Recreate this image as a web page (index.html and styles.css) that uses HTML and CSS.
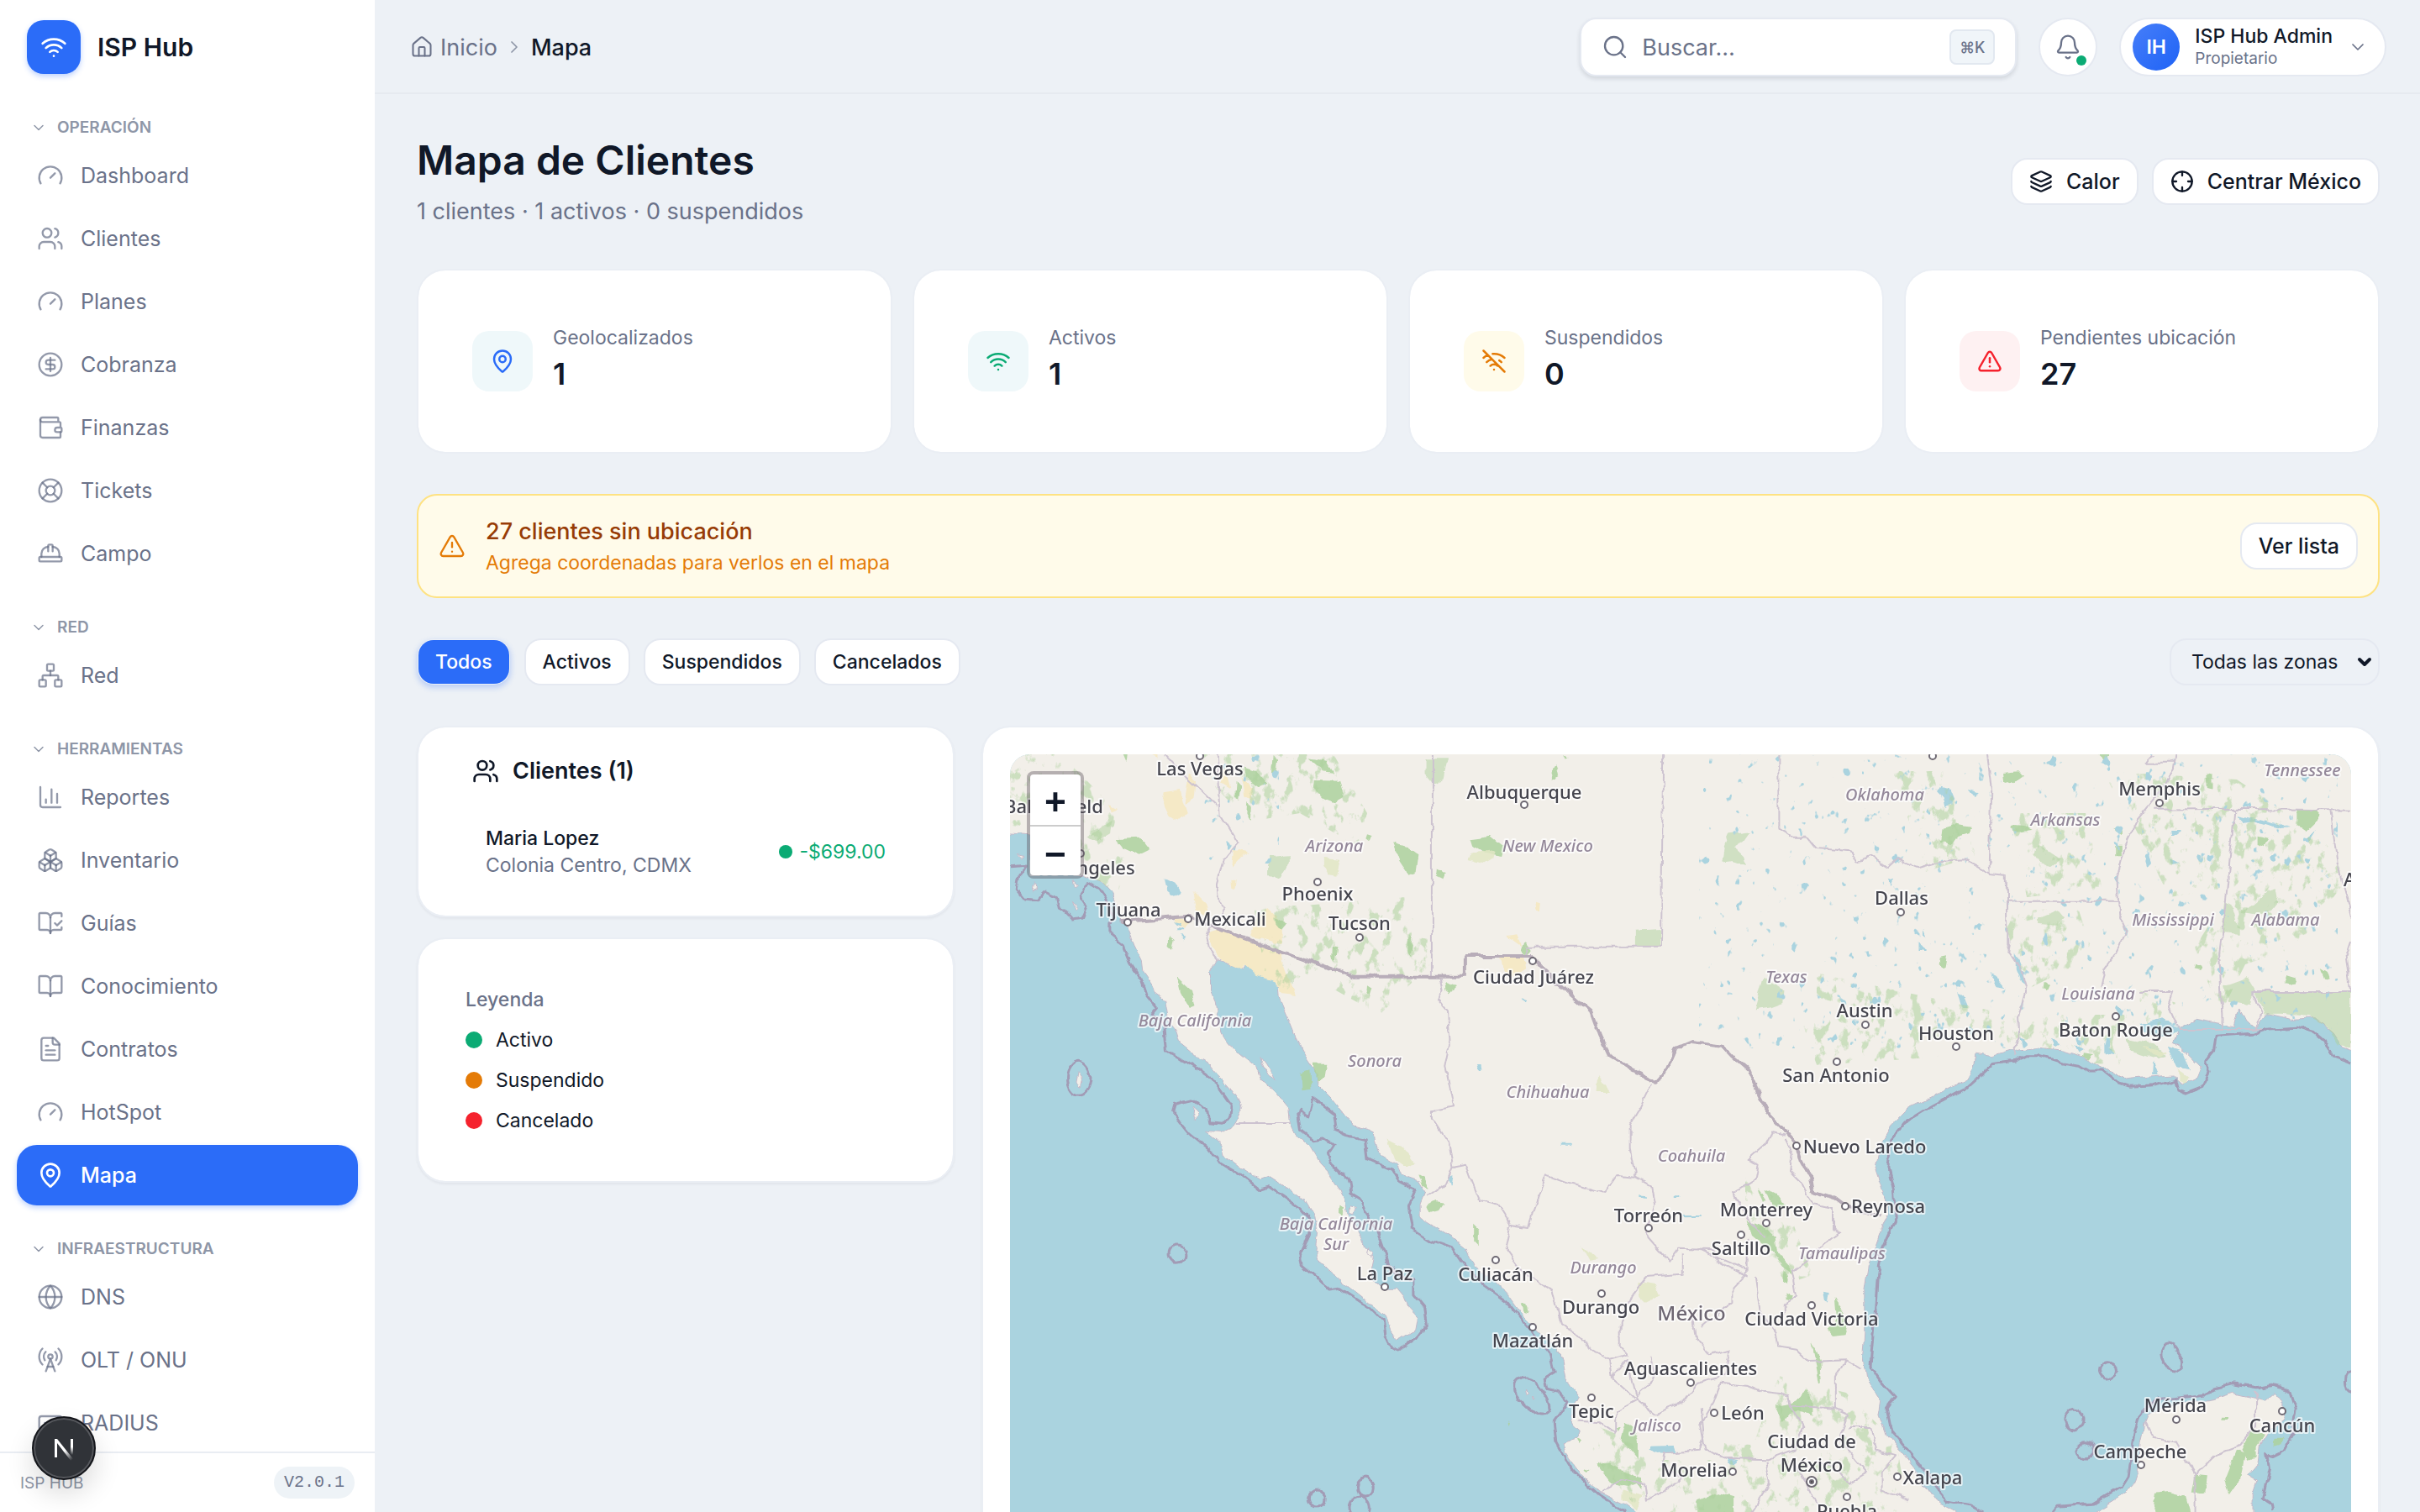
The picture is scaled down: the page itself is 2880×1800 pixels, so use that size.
FILE: index.html
```html
<!DOCTYPE html>
<html lang="es">
<head>
<meta charset="utf-8">
<meta name="viewport" content="width=device-width, initial-scale=1">
<title>Mapa de Clientes · ISP Hub</title>
<link rel="stylesheet" href="styles.css">
</head>
<body>
<svg class="sprite" aria-hidden="true">
  <symbol id="wifi" viewBox="0 0 24 24"><path d="M12 20h.01M2 8.82a15 15 0 0 1 20 0M5 12.859a10 10 0 0 1 14 0M8.5 16.429a5 5 0 0 1 7 0"/></symbol>
  <symbol id="wifi-off" viewBox="0 0 24 24"><path d="M12 20h.01M8.5 16.429a5 5 0 0 1 7 0M5 12.859a10 10 0 0 1 5.17-2.69M19 12.859a10 10 0 0 0-2.007-1.523M2 8.82a15 15 0 0 1 4.177-2.643M22 8.82a15 15 0 0 0-11.288-3.764M2 2l20 20"/></symbol>
  <symbol id="chev-down" viewBox="0 0 24 24"><path d="m6 9 6 6 6-6"/></symbol>
  <symbol id="chev-right" viewBox="0 0 24 24"><path d="m9 18 6-6-6-6"/></symbol>
  <symbol id="gauge" viewBox="0 0 24 24"><path d="m12 14 4-4"/><path d="M3.34 19a10 10 0 1 1 17.32 0"/></symbol>
  <symbol id="users" viewBox="0 0 24 24"><path d="M16 21v-2a4 4 0 0 0-4-4H6a4 4 0 0 0-4 4v2"/><circle cx="9" cy="7" r="4"/><path d="M22 21v-2a4 4 0 0 0-3-3.87M16 3.13a4 4 0 0 1 0 7.75"/></symbol>
  <symbol id="dollar" viewBox="0 0 24 24"><circle cx="12" cy="12" r="10"/><path d="M16 8h-6a2 2 0 1 0 0 4h4a2 2 0 1 1 0 4H8"/><path d="M12 18V6"/></symbol>
  <symbol id="wallet" viewBox="0 0 24 24"><path d="M19 7V4a1 1 0 0 0-1-1H5a2 2 0 0 0 0 4h15a1 1 0 0 1 1 1v4h-3a2 2 0 0 0 0 4h3a1 1 0 0 0 1-1v-2a1 1 0 0 0-1-1"/><path d="M3 5v14a2 2 0 0 0 2 2h15a1 1 0 0 0 1-1v-4"/></symbol>
  <symbol id="buoy" viewBox="0 0 24 24"><circle cx="12" cy="12" r="10"/><path d="m4.93 4.93 4.24 4.24"/><path d="m14.83 9.17 4.24-4.24"/><path d="m14.83 14.83 4.24 4.24"/><path d="m9.17 14.83-4.24 4.24"/><circle cx="12" cy="12" r="4"/></symbol>
  <symbol id="hat" viewBox="0 0 24 24"><path d="M10 10V5a1 1 0 0 1 1-1h2a1 1 0 0 1 1 1v5"/><path d="M14 6a6 6 0 0 1 6 6v3"/><path d="M4 15v-3a6 6 0 0 1 6-6"/><rect x="2" y="15" width="20" height="4" rx="1"/></symbol>
  <symbol id="network" viewBox="0 0 24 24"><rect x="16" y="16" width="6" height="6" rx="1"/><rect x="2" y="16" width="6" height="6" rx="1"/><rect x="9" y="2" width="6" height="6" rx="1"/><path d="M5 16v-3a1 1 0 0 1 1-1h12a1 1 0 0 1 1 1v3"/><path d="M12 12V8"/></symbol>
  <symbol id="chart" viewBox="0 0 24 24"><path d="M3 3v16a2 2 0 0 0 2 2h16"/><path d="M18 17V9"/><path d="M13 17V5"/><path d="M8 17v-3"/></symbol>
  <symbol id="boxes" viewBox="0 0 24 24"><path d="M2.97 12.92A2 2 0 0 0 2 14.63v3.24a2 2 0 0 0 .97 1.71l3 1.8a2 2 0 0 0 2.06 0L12 19v-5.5l-5-3-4.03 2.42Z"/><path d="m7 16.5-4.74-2.85"/><path d="m7 16.5 5-3"/><path d="M7 16.5v5.17"/><path d="M12 13.5V19l3.97 2.38a2 2 0 0 0 2.06 0l3-1.8a2 2 0 0 0 .97-1.71v-3.24a2 2 0 0 0-.97-1.71L17 10.5l-5 3Z"/><path d="m17 16.5-5-3"/><path d="m17 16.5 4.74-2.85"/><path d="M17 16.5v5.17"/><path d="M7.97 4.42A2 2 0 0 0 7 6.13v4.37l5 3 5-3V6.13a2 2 0 0 0-.97-1.71l-3-1.8a2 2 0 0 0-2.06 0l-3 1.8Z"/><path d="M12 8 7.26 5.15"/><path d="m12 8 4.74-2.85"/><path d="M12 13.5V8"/></symbol>
  <symbol id="book-check" viewBox="0 0 24 24"><path d="M12 21V7"/><path d="m16 12 2 2 4-4"/><path d="M22 6V4a1 1 0 0 0-1-1h-5a4 4 0 0 0-4 4 4 4 0 0 0-4-4H3a1 1 0 0 0-1 1v13a1 1 0 0 0 1 1h6a3 3 0 0 1 3 3 3 3 0 0 1 3-3h6a1 1 0 0 0 1-1v-1.3"/></symbol>
  <symbol id="book" viewBox="0 0 24 24"><path d="M12 7v14"/><path d="M3 18a1 1 0 0 1-1-1V4a1 1 0 0 1 1-1h5a4 4 0 0 1 4 4 4 4 0 0 1 4-4h5a1 1 0 0 1 1 1v13a1 1 0 0 1-1 1h-6a3 3 0 0 0-3 3 3 3 0 0 0-3-3z"/></symbol>
  <symbol id="file" viewBox="0 0 24 24"><path d="M15 2H6a2 2 0 0 0-2 2v16a2 2 0 0 0 2 2h12a2 2 0 0 0 2-2V7Z"/><path d="M14 2v4a2 2 0 0 0 2 2h4"/><path d="M10 9H8"/><path d="M16 13H8"/><path d="M16 17H8"/></symbol>
  <symbol id="pin" viewBox="0 0 24 24"><path d="M20 10c0 4.993-5.539 10.193-7.399 11.799a1 1 0 0 1-1.202 0C9.539 20.193 4 14.993 4 10a8 8 0 0 1 16 0"/><circle cx="12" cy="10" r="3"/></symbol>
  <symbol id="globe" viewBox="0 0 24 24"><circle cx="12" cy="12" r="10"/><path d="M12 2a14.5 14.5 0 0 0 0 20 14.5 14.5 0 0 0 0-20"/><path d="M2 12h20"/></symbol>
  <symbol id="tower" viewBox="0 0 24 24"><path d="M4.9 16.1C1 12.2 1 5.8 4.9 1.9"/><path d="M7.8 4.7a6.14 6.14 0 0 0-.8 7.5"/><circle cx="12" cy="9" r="2"/><path d="M16.2 4.8c2 2 2.26 5.11.8 7.47"/><path d="M19.1 1.9a9.96 9.96 0 0 1 0 14.1"/><path d="M9.5 18h5"/><path d="m8 22 4-11 4 11"/></symbol>
  <symbol id="radius" viewBox="0 0 24 24"><rect x="2" y="6" width="20" height="12" rx="2"/><path d="M7 12h.01M12 12h.01M17 12h.01"/></symbol>
  <symbol id="home" viewBox="0 0 24 24"><path d="M15 21v-8a1 1 0 0 0-1-1h-4a1 1 0 0 0-1 1v8"/><path d="M3 10a2 2 0 0 1 .709-1.528l7-5.999a2 2 0 0 1 2.582 0l7 5.999A2 2 0 0 1 21 10v9a2 2 0 0 1-2 2H5a2 2 0 0 1-2-2z"/></symbol>
  <symbol id="search" viewBox="0 0 24 24"><circle cx="11" cy="11" r="8"/><path d="m21 21-4.3-4.3"/></symbol>
  <symbol id="bell" viewBox="0 0 24 24"><path d="M10.268 21a2 2 0 0 0 3.464 0"/><path d="M3.262 15.326A1 1 0 0 0 4 17h16a1 1 0 0 0 .74-1.673C19.41 13.956 18 12.499 18 8A6 6 0 0 0 6 8c0 4.499-1.411 5.956-2.738 7.326"/></symbol>
  <symbol id="layers" viewBox="0 0 24 24"><path d="M12.83 2.18a2 2 0 0 0-1.66 0L2.6 6.08a1 1 0 0 0 0 1.83l8.58 3.91a2 2 0 0 0 1.66 0l8.58-3.9a1 1 0 0 0 0-1.83z"/><path d="M2 12a1 1 0 0 0 .58.91l8.6 3.91a2 2 0 0 0 1.65 0l8.58-3.9A1 1 0 0 0 22 12"/><path d="M2 17a1 1 0 0 0 .58.91l8.6 3.91a2 2 0 0 0 1.65 0l8.58-3.9A1 1 0 0 0 22 17"/></symbol>
  <symbol id="crosshair" viewBox="0 0 24 24"><circle cx="12" cy="12" r="10"/><path d="M22 12h-4M6 12H2M12 6V2M12 22v-4"/></symbol>
  <symbol id="alert" viewBox="0 0 24 24"><path d="m21.73 18-8-14a2 2 0 0 0-3.48 0l-8 14A2 2 0 0 0 4 21h16a2 2 0 0 0 1.73-3"/><path d="M12 9v4"/><path d="M12 17h.01"/></symbol>
</svg>

<div class="app">
  <aside class="sidebar">
    <div class="brand">
      <span class="brand-mark"><svg class="icon"><use href="#wifi"/></svg></span>
      <span>ISP Hub</span>
    </div>
    <nav class="nav" aria-label="Principal">
      <section class="nav-group">
        <button class="nav-title" type="button"><svg class="icon"><use href="#chev-down"/></svg>OPERACIÓN</button>
        <a class="nav-item" href="#"><svg class="icon"><use href="#gauge"/></svg>Dashboard</a>
        <a class="nav-item" href="#"><svg class="icon"><use href="#users"/></svg>Clientes</a>
        <a class="nav-item" href="#"><svg class="icon"><use href="#gauge"/></svg>Planes</a>
        <a class="nav-item" href="#"><svg class="icon"><use href="#dollar"/></svg>Cobranza</a>
        <a class="nav-item" href="#"><svg class="icon"><use href="#wallet"/></svg>Finanzas</a>
        <a class="nav-item" href="#"><svg class="icon"><use href="#buoy"/></svg>Tickets</a>
        <a class="nav-item" href="#"><svg class="icon"><use href="#hat"/></svg>Campo</a>
      </section>
      <section class="nav-group">
        <button class="nav-title" type="button"><svg class="icon"><use href="#chev-down"/></svg>RED</button>
        <a class="nav-item" href="#"><svg class="icon"><use href="#network"/></svg>Red</a>
      </section>
      <section class="nav-group">
        <button class="nav-title" type="button"><svg class="icon"><use href="#chev-down"/></svg>HERRAMIENTAS</button>
        <a class="nav-item" href="#"><svg class="icon"><use href="#chart"/></svg>Reportes</a>
        <a class="nav-item" href="#"><svg class="icon"><use href="#boxes"/></svg>Inventario</a>
        <a class="nav-item" href="#"><svg class="icon"><use href="#book-check"/></svg>Guías</a>
        <a class="nav-item" href="#"><svg class="icon"><use href="#book"/></svg>Conocimiento</a>
        <a class="nav-item" href="#"><svg class="icon"><use href="#file"/></svg>Contratos</a>
        <a class="nav-item" href="#"><svg class="icon"><use href="#gauge"/></svg>HotSpot</a>
        <a class="nav-item active" href="#" aria-current="page"><svg class="icon"><use href="#pin"/></svg>Mapa</a>
      </section>
      <section class="nav-group">
        <button class="nav-title" type="button"><svg class="icon"><use href="#chev-down"/></svg>INFRAESTRUCTURA</button>
        <a class="nav-item" href="#"><svg class="icon"><use href="#globe"/></svg>DNS</a>
        <a class="nav-item" href="#"><svg class="icon"><use href="#tower"/></svg>OLT / ONU</a>
        <a class="nav-item" href="#"><svg class="icon"><use href="#radius"/></svg>RADIUS</a>
      </section>
    </nav>
    <footer class="side-foot"><span>ISP HUB</span><span class="version">V2.0.1</span></footer>
  </aside>

  <div class="page">
    <header class="topbar">
      <nav class="crumbs" aria-label="Ruta">
        <a href="#"><svg class="icon"><use href="#home"/></svg>Inicio</a>
        <svg class="icon crumb-sep"><use href="#chev-right"/></svg>
        <span class="here">Mapa</span>
      </nav>
      <div class="search">
        <svg class="icon"><use href="#search"/></svg>
        <input type="text" placeholder="Buscar…" aria-label="Buscar">
        <kbd>⌘K</kbd>
      </div>
      <button class="bell" type="button" aria-label="Notificaciones"><svg class="icon"><use href="#bell"/></svg><span class="bell-dot"></span></button>
      <button class="user" type="button">
        <span class="avatar">IH</span>
        <span class="user-text"><span class="user-name">ISP Hub Admin</span><span class="user-role">Propietario</span></span>
        <svg class="icon"><use href="#chev-down"/></svg>
      </button>
    </header>

    <main class="content">
      <div class="page-head">
        <div>
          <h1>Mapa de Clientes</h1>
          <p>1 clientes · 1 activos · 0 suspendidos</p>
        </div>
        <div class="actions">
          <button class="btn" type="button"><svg class="icon"><use href="#layers"/></svg>Calor</button>
          <button class="btn" type="button"><svg class="icon"><use href="#crosshair"/></svg>Centrar México</button>
        </div>
      </div>

      <div class="stats">
        <article class="stat"><span class="tile blue"><svg class="icon"><use href="#pin"/></svg></span><div class="stat-text"><p>Geolocalizados</p><strong>1</strong></div></article>
        <article class="stat"><span class="tile green"><svg class="icon"><use href="#wifi"/></svg></span><div class="stat-text"><p>Activos</p><strong>1</strong></div></article>
        <article class="stat"><span class="tile amber"><svg class="icon"><use href="#wifi-off"/></svg></span><div class="stat-text"><p>Suspendidos</p><strong>0</strong></div></article>
        <article class="stat"><span class="tile red"><svg class="icon"><use href="#alert"/></svg></span><div class="stat-text"><p>Pendientes ubicación</p><strong>27</strong></div></article>
      </div>

      <div class="notice">
        <svg class="icon"><use href="#alert"/></svg>
        <div class="notice-text"><strong>27 clientes sin ubicación</strong><p>Agrega coordenadas para verlos en el mapa</p></div>
        <button class="btn" type="button">Ver lista</button>
      </div>

      <div class="filters">
        <button class="btn primary" type="button">Todos</button>
        <button class="btn" type="button">Activos</button>
        <button class="btn" type="button">Suspendidos</button>
        <button class="btn" type="button">Cancelados</button>
        <div class="zone">
          <select aria-label="Zona"><option>Todas las zonas</option></select>
          <svg class="icon"><use href="#chev-down"/></svg>
        </div>
      </div>

      <div class="board">
        <div class="side">
          <section class="card clients">
            <h2><svg class="icon"><use href="#users"/></svg>Clientes (1)</h2>
            <button class="client" type="button">
              <span class="client-text"><span class="client-name">Maria Lopez</span><span class="client-place">Colonia Centro, CDMX</span></span>
              <span class="balance"><i class="dot small"></i>-$699.00</span>
            </button>
          </section>
          <section class="card legend">
            <h3>Leyenda</h3>
            <p><i class="dot"></i>Activo</p>
            <p><i class="dot amber-dot"></i>Suspendido</p>
            <p><i class="dot red-dot"></i>Cancelado</p>
          </section>
        </div>
        <section class="card map-card">
          <div class="map">
            <svg class="map-art" viewBox="0 0 1596 1100" preserveAspectRatio="xMidYMin slice" role="img" aria-label="Mapa de México">
              <defs>
                <filter id="rough" x="0" y="0" width="1596" height="1100" filterUnits="userSpaceOnUse">
                  <feTurbulence type="fractalNoise" baseFrequency=".045" numOctaves="4" seed="4"/>
                  <feDisplacementMap in="SourceGraphic" scale="9" xChannelSelector="R" yChannelSelector="G"/>
                </filter>
                <filter id="speckle" x="0" y="0" width="1596" height="1100" filterUnits="userSpaceOnUse">
                  <feTurbulence type="fractalNoise" baseFrequency=".07 .05" numOctaves="5" seed="9"/>
                  <feColorMatrix values="0 0 0 0 0  0 0 0 0 0  0 0 0 0 0  9 0 0 0 -5.1" result="n"/>
                  <feComposite in="SourceGraphic" in2="n" operator="in"/>
                </filter>
                <filter id="specks" x="0" y="0" width="1596" height="1100" filterUnits="userSpaceOnUse">
                  <feTurbulence type="fractalNoise" baseFrequency=".08 .06" numOctaves="3" seed="23"/>
                  <feColorMatrix values="0 0 0 0 0  0 0 0 0 0  0 0 0 0 0  0 16 0 0 -11.4" result="n"/>
                  <feComposite in="SourceGraphic" in2="n" operator="in"/>
                </filter>
                <clipPath id="land-clip"><use href="#land" transform="translate(-22 -38) scale(.5485 .33333)"/></clipPath>
              </defs>
              <g filter="url(#rough)">
                <g transform="translate(-22 -38) scale(.5485 .33333)">
                  <path id="land" class="land" d="M-40 400 40 402 80 408 85 470 140 530 200 545 240 570 262 610 275 660 280 700 290 720 300 760 310 800 325 850 328 890 345 930 355 965 375 990 380 1040 385 1070 400 1100 410 1150 440 1190 470 1220 490 1260 515 1300 535 1345 542 1380 538 1400 530 1425 520 1450 500 1465 462 1462 500 1510 505 1545 545 1595 580 1630 600 1618 640 1660 680 1705 700 1760 705 1820 700 1880 705 1920 740 1970 780 2020 830 2085 855 2120 865 2170 882 2208 920 2170 925 2125 905 2090 895 2050 880 2020 858 2020 830 2000 825 1950 830 1910 805 1860 800 1830 785 1780 770 1750 765 1700 755 1660 735 1610 712 1570 690 1510 660 1470 648 1430 645 1380 640 1370 610 1310 585 1280 575 1230 540 1185 515 1150 500 1110 490 1050 485 1000 475 960 475 890 490 845 545 880 555 860 580 890 620 925 622 980 640 1050 655 1110 680 1190 700 1240 710 1300 740 1350 770 1410 785 1440 830 1460 832 1500 840 1540 880 1580 890 1620 925 1640 940 1680 930 1720 930 1770 960 1800 1000 1840 1030 1880 1045 1940 1090 1990 1120 2040 1150 2110 1190 2180 1225 2230 1238 2280 1245 2340 1275 2410 1265 2440 1255 2500 1275 2530 1270 2555 1240 2570 1245 2610 1280 2690 1320 2750 1370 2790 1395 2820 1450 2900 1700 3600 2200 3600 2092 2820 2047 2780 2022 2720 2002 2660 1972 2600 1942 2540 1927 2470 1932 2420 1897 2340 1890 2260 1894 2180 1894 2030 1902 1940 1917 1880 1932 1810 1947 1750 1937 1680 1917 1580 1927 1510 1952 1440 1987 1380 2062 1320 2112 1280 2132 1230 2137 1180 2172 1190 2212 1170 2262 1160 2322 1170 2362 1190 2382 1210 2432 1250 2462 1275 2522 1265 2562 1260 2582 1290 2612 1270 2622 1230 2592 1180 2562 1150 2572 1110 2577 1090 2612 1060 2662 1075 2697 1085 2707 1020 2722 1070 2747 1085 2767 1040 2822 1060 2872 1055 2912 1110 2932 1160 3000 1200 3000 60 -40 60Z"/>
                  <path class="land" d="M2392 2820 2432 2780 2477 2730 2492 2650 2494 2570 2504 2500 2512 2470 2572 2430 2642 2420 2692 2395 2732 2410 2762 2420 2782 2395 2802 2420 2802 2465 2807 2490 2772 2530 2752 2580 2747 2650 2727 2690 2747 2710 2737 2760 2732 3400 2300 3400Z"/>
                  <path class="land isle" d="M583 1190 595 1215 612 1260 618 1280 600 1262 588 1225ZM780 1730l10 5-5 20-10-5ZM820 1880l10 15-4 15-8-10ZM188 1250l8 20-4 30-8-15ZM440 1370l8 25-6 30-5-20ZM90 575l10 20-12 8ZM175 565l10 15-6 8ZM172 640l12 22-5 8ZM55 470l18 5-10 8ZM1160 2385l8 15-5 5ZM1175 2410l6 10-4 4Z"/>
                  <!-- desert -->
                  <path class="sand" d="M470 750 500 735 560 775 610 800 632 815 630 850 645 920 660 975 630 970 615 925 575 905 550 865 540 880 495 845 475 800ZM600 660 620 690 632 790 560 765 575 700ZM438 610l25 40 8 40-25-15ZM375 250l35-10 5 40 12 40-20 30-25-15-12-40ZM430 180l15 30-5 60-20 20ZM505 150l15 90-20-20ZM540 190l25 40 5 50-20-10ZM525 455l32 10-15 20-20 35ZM340 114l20 0 0 14ZM250 290l22 20-15 10ZM400 690l30 25-12 25-20-15ZM1105 840l50 0 3 40-25 25-20-20ZM1120 765l20-5 10 40ZM1180 635l12 5-2 40-8-10ZM520 560l10 5-2 30-6-5Z"/>
                  <!-- woodland -->
                  <g class="wood">
                    <path d="M270 415 320 410 342 455 318 475 285 450ZM548 160 575 175 595 215 575 225 555 200ZM700 210 755 212 765 260 745 280 715 262 698 235ZM690 130l35 10 15 40-20-5ZM870 430l30 15 25 30-5 60-15 10-20-50ZM1040 415 1085 405 1112 440 1105 480 1070 470 1045 440ZM402 905l12 20 20 30 8 60-12 8-20-60ZM530 215l10 20-4 45-8-20ZM555 285l8 20-2 50-8-30ZM968 525l16 15-6 25-12-10ZM1155 780l15 30-10 25-12-20ZM905 760l10 30-4 50-8-20ZM738 800l10 5-5 55-6-20ZM615 700l22 20-12 25-10-20ZM385 765l12 15-5 30-8-12ZM610 120l10 20-5 60-8-20ZM285 114l10 0-2 30ZM815 400l10 5-5 20-8-10ZM1225 150l8 40-14 10-4-20ZM1240 114l12 16-8 0Z"/>
                    <path d="M670 1250 690 1240 692 1310 672 1315ZM700 1220l28 0-5 50-12 20-10-20Z"/>
                    <path d="M985 930l25 15-15 25-8-10ZM815 940l10 10-5 25-6-15ZM945 1730l20-20 15 5-10 25-20 10ZM925 1615l12 10 12 40-15-8ZM1045 1790l12 20 0 60-12-20ZM1150 2070l12 10 5 30-12-5ZM752 1730l12 8-3 22-10-10Z"/>
                    <path d="M2197 180l30-5 10 20-20 25-18-10ZM2065 380l30-15 30 10-5 15-20 10-15 35-25-10ZM2215 365l30 5 15 10-40 10ZM2435 380l15 15 0 18-12-15ZM2438 440l12 0 0 35-12 0ZM2832 310l45 0-2 35-25 40-18-20ZM2745 410l28 10-10 25-18-10ZM2282 930l15 10-5 20-12-5ZM2058 840l15-5-5 45-12-15ZM2615 860l12 10-5 12-10-5ZM2810 900l20 10-5 20-20-5ZM2880 870l15 15 5 25-10 5ZM2400 114l25 0-8 25ZM2635 185l15-5 0 50-12-5Z"/>
                    <path d="M1665 1660l10 20 8 30-8 5ZM1680 1670l30 25 15 30-30 5ZM1640 1780l35 15 25 40 5 60 28 50 5 25-18-20-25-60-45-60ZM1720 1960l10 20 0 25-12-10ZM1830 2055l22 50 8 50-5 30-30 5-10-20 20-25ZM1722 2035l15 10-3 22-12-5ZM1780 2215l18 60 3 75-5 5-8-70ZM1700 2440l30-10 25-20 12-30 15 40 0 60-30-20-20 10-15 30ZM1375 2500l15 10 10 60 0 60-20-40-15-30ZM1315 2650l25-5 50 40 20 25-30 20-35-15ZM1355 2520l10 0-5 15ZM1400 2690l12 5-4 45-8-20ZM1530 2780l40-30 40 20 0 60-80 0ZM2525 2750l30-5 35 15 10 60-60 50-20-60ZM2610 2690l28 5-5 55-30 0ZM2735 2530l25 20-15 40 0 30-20 20-15-40ZM2700 2600l20 15-10 80-25 60-10-50ZM2785 2555l18 0-8 25-12 5ZM2670 2480l20 0-5 12-15 0Z"/>
                    <path d="M1120 2500l5 10-3 10ZM1270 2555l10 10-5 12ZM1285 2665l12 5-5 10ZM2370 1180l20 5-10 20-12-10Z"/>
                  </g>
                  <g class="wood grove">
                    <path d="M600 480l45-5 0 25-20 60-25-20ZM940 130l50 0-10 70-20 20-20-40ZM1400 740l50-5 0 65-50 0ZM205 410l55-60-5 50-30 30ZM2270 440l15 10 35 40-20 25-25-15-10-25ZM1600 400l45-10-15 35-20 20 20 30 5 35-25-15-25 5 5-60ZM2765 610l20-10 5 45-15 30-25 15-40-10 25-30ZM2675 640l20 20 10 70 0 25-38-5ZM1675 905l20 25 25 25-2 50-25 15-38 10 8-50ZM2270 700l45-30 15 30-15 25-45-5ZM2675 940l50-30 15 40-10 55-50-10ZM2740 965 2950 965 2950 1160 2920 1150 2900 1090 2860 1050 2800 1040 2760 1040ZM2460 1130l60 20 30 40-20 10-60-30Z"/>
                  </g>
                  <!-- lagoons and lakes -->
                  <path class="water" d="M375 555l25 20 12 30-15 15-15-20ZM398 715l12 5-2 10-10-5ZM398 738l18 2 0 8-18 0ZM408 762l14 5-5 8ZM2060 230l20 10 10 40-20 30-5-40-12-20ZM2120 240l20 10-10 15ZM2165 900l20 15 15 30-20-5ZM2222 820l10 40 10 80-8-10-12-50ZM2095 960l15 20 10 40-12 0ZM2020 740l8 30-8-5ZM2010 790l20 20-20 0ZM1945 560l12 5-5 20ZM2560 390l20 0-18 22ZM2558 490l18 15-15 5ZM2700 330l60 20 60 30-20 0-60-28-25 5ZM2845 420l30-40-15 40ZM1500 1755l35 0 4 5-35 2ZM1425 2600l5-15 50-2 5 25-40 5ZM1600 2630l20 8-10 12-15-5ZM1805 2030l12 5-3 40-6-10ZM1050 1215l10 0 2 25-6 0ZM1240 1505l20 0-2 6-20 0ZM1150 985l10 5-2 8-6-5ZM990 1620l12-5-4 40ZM2490 1080l50-20 40 40-20 20-60-10ZM2350 1150l20 20-10 10ZM2300 1130l18 20-10 10ZM2230 1120l15 20-10 15ZM2420 1150l15 30-15 10ZM2520 1210l10 50-12 0ZM2550 1160l35 20 15 60-30-10ZM1410 1690l10 3 0 8-10-3ZM1480 1690l10 0 0 8-10 0ZM2730 2680l18 0-10 20Z"/>
                  <g class="wood pale"><path d="M2575 1240l20 25-8 25-12-15ZM2500 1160l50 20-20 15ZM1040 470l50-10-5 30-20 20-30-15ZM720 480l35 5-5 60-20-5-10-30ZM860 1490l30 25 30 60-20 10-25-20ZM1400 2000l40 10 10 40-30 25-15-25ZM1280 1860l15 30 20 30-15 5ZM1315 1260l12 30 15 30-30 0ZM1370 2740l40 20-10 55-30-40Z"/></g>
                </g>
              </g>
              <g clip-path="url(#land-clip)">
                <g class="wood scatter" filter="url(#speckle)">
                  <path d="M0 0h60l60 60 20 80-30 60-60-30L0 130ZM225 0h160l40 70-10 40-70-40-60 10-40-40ZM290 180l60 0 120-10 30 80-60 60-90-50-40 40ZM340 200l160 20-10 40-120 0ZM1300 20l160 10 60 40 40 60-40 60-80-30-60 10-40-80ZM1050 20l60 0 40 100-60 20ZM1190 70l90 0 20 90-90 10ZM1460 150l100-60 30 60-60 80-60 20-30 60-30-80ZM1180 190l90-10 20 60-80 40ZM960 260l90 20 140 30 0 30-230-50ZM940 310l160 0 10 50-150 10ZM1340 280l60 20-40 40ZM1180 310l160 0-20 60-130-10Z"/>
                  <path d="M875 500l50 40 30 80-30 10-50-60ZM915 740l80 20 60 60 20 120-60 40-180-20 20-60ZM850 820l160 10 30 90-200 0ZM700 800l70 30 30 80-60-20-50-60ZM760 840l140 0 120 60-260 0ZM1520 800l40 20-40 70-60 20Z"/>
                </g>
                <g class="lake" filter="url(#specks)"><path d="M820 0h760v350h-760ZM230 0h90v130h-90Z"/></g>
              </g>
              <g filter="url(#rough)">
                <g class="lines" transform="translate(-22 -38) scale(.5485 .33333)">
                  <path class="state" d="M957 114V908M1457 114 1453 800H1160V834M375 114 420 190 490 300M490 114 497 330 535 430 505 490 490 580 495 640 508 660 490 700 465 760 470 810 490 850M975 915 980 960 968 990 990 1030 995 1150 985 1230 1003 1375 957 1390 957 1415 990 1500 1000 1590 1030 1580 1045 1650 1060 1710 1100 1725 1125 1790 1165 1800 1185 1700 1205 1615 1255 1645 1330 1680 1355 1620 1398 1625M1000 1590 985 1650 945 1695M1435 1285 1410 1370 1385 1440 1385 1520 1398 1625 1430 1655 1437 1720 1420 1830 1470 1925 1490 1880 1568 1885 1580 1930 1640 1980M1125 1795 1115 1880 1150 1960 1180 1990 1215 2030 1235 2150 1290 2200 1300 2240 1340 2280 1345 2340 1400 2420 1355 2460 1355 2540 1320 2500 1275 2495M1500 1900V1970L1420 1980 1390 2040 1365 2140 1365 2230 1380 2260 1340 2280M530 1431H648"/>
                  <path class="state" d="M1709 114V380L1740 410 1770 410 1790 450 1865 460 1880 500 1905 480 1945 520 1965 490 2010 520 2060 495 2110 490 2165 540 2202 545 2203 800 2230 870 2245 950 2228 1050 2230 1120 2218 1160 2222 1190M2160 114 2170 240 2165 540M2203 638H2443M2570 114 2565 170 2530 260 2490 340 2455 460 2440 560 2445 680 2462 740 2440 820 2415 880 2405 940M2487 963H2562L2552 1010 2575 1095H2760M2520 311 2690 308 2950 314M2697 314 2678 640 2664 820 2671 1095M2905 314 2920 500 2950 700M2950 963H2735L2755 1040 2745 1095M2520 114 2508 143H2567M2950 780 2940 830 2950 960"/>
                  <path class="state" d="M1722 1475 1692 1465 1677 1510 1642 1560 1662 1580 1657 1630 1610 1680 1642 1770 1682 1840M1722 1490 1737 1540 1732 1600 1757 1640 1782 1720 1825 1735V1810L1840 1820 1737 1955 1747 2050 1717 2080 1717 2120M1532 1880 1572 1910 1642 1960V1850M1642 1960 1607 2020V2070L1542 2160M1657 1980 1667 2100 1702 2180 1707 2230 1747 2240 1772 2280 1852 2275 1887 2310M1852 2275 1832 2340V2450L1732 2440 1727 2400 1672 2390 1642 2370 1582 2360 1567 2430 1537 2510 1547 2600 1592 2630 1682 2635 1740 2600 1760 2520 1732 2440M1522 2120 1530 2200 1560 2260 1600 2240 1590 2330 1530 2360 1500 2430 1440 2470 1400 2420 1380 2280 1345 2340M1430 2270 1440 2340 1400 2400M1540 2450 1545 2540 1535 2600 1460 2610 1455 2650 1500 2700 1420 2780 1415 2720 1370 2700 1310 2760M1680 2640 1690 2720 1650 2820M1832 2450 1860 2470 1840 2560 1870 2620 1900 2680 1860 2720 1830 2660 1790 2640M1860 2520 1910 2520 1920 2600 1960 2620 1930 2680 1930 2740 1990 2780M1740 2640 1770 2720 1800 2820M2504 2500 2522 2555 2567 2570 2610 2690M2744 2390V2510L2710 2580 2660 2610 2610 2690V2820"/>
                  <path class="nation" d="M280 712 430 692 490 735 785 908H1028V834H1170L1190 870 1240 950 1300 1030 1320 1120 1340 1190 1390 1240 1445 1280 1465 1240 1485 1165 1520 1140 1587 1155 1607 1190 1642 1240 1657 1300 1687 1400 1722 1460 1747 1510 1757 1570 1777 1630 1784 1675 1832 1700 1852 1725 1932 1765"/>
                  <path class="sea" d="M40 515 75 510 60 545 55 590 75 630 100 635 120 600 145 620 150 660 175 705 195 700 206 660 190 620 210 575 235 600 255 650 270 700 255 720 255 760 285 800 300 860 325 920 335 970 358 1015 345 1040 375 1080 380 1170 440 1230 490 1290 520 1360 518 1400 500 1435 470 1430 465 1380 440 1345 400 1360 395 1390 410 1430 430 1470 490 1550 495 1570 545 1620 580 1665 600 1655 670 1735 695 1780 690 1830 670 1900 675 1940 735 2025 755 2020 820 2090 850 2140 855 2190 870 2230 885 2240 920 2205 945 2150 940 2090 915 2040 915 1990 890 1980 860 1940 850 1880 835 1810 810 1750 800 1700 780 1680 775 1630 735 1570 730 1540 742 1510 720 1485 700 1490 670 1450 665 1395 670 1380 690 1410 700 1345 720 1370 745 1400 750 1460 770 1475 810 1490 815 1560 870 1600 885 1640 920 1670 905 1730 912 1810 950 1850 1000 1880 1025 1940 1070 2010 1120 2070 1160 2150 1210 2250 1220 2320 1200 2340 1205 2380 1230 2390 1250 2430 1220 2500 1225 2570 1260 2670 1310 2750 1375 2820"/>
                  <path class="sea" d="M2152 2820 2122 2795 2072 2780 2052 2740 2012 2650 1952 2530 1942 2450 1959 2410 1932 2360 1907 2300 1910 2230 1917 2100 1922 1980 1932 1880 1962 1770 1957 1670 1945 1590 1952 1490 1982 1430 2032 1380 2112 1310 2172 1220 2222 1210 2242 1190 2272 1190 2322 1215 2362 1225 2382 1245 2412 1245 2447 1290 2472 1303 2522 1298 2567 1275 2572 1310 2592 1323 2627 1300 2642 1250 2632 1210 2652 1170 2657 1120 2742 1110 2772 1095 2832 1090 2872 1110 2897 1145 2912 1195 2950 1218M2302 2820 2312 2800 2392 2790 2452 2730 2467 2690 2472 2630 2482 2530 2497 2460 2532 2420 2632 2400 2652 2380 2692 2363 2747 2378 2777 2368 2817 2385 2830 2450 2822 2540 2802 2600 2777 2620 2767 2605 2772 2670 2757 2770 2777 2790 2780 2820"/>
                  <g class="sea">
                    <ellipse cx="190" cy="1273" rx="25" ry="60"/><ellipse cx="402" cy="1898" rx="19" ry="32"/><ellipse cx="706" cy="2775" rx="18" ry="30"/><ellipse cx="811" cy="2730" rx="19" ry="33"/><ellipse cx="797" cy="2806" rx="24" ry="42"/>
                    <path d="M1135 2380c0-35 25-55 45-25 20 35 32 70 30 95-3 25-22 32-40 5-18-25-35-50-35-75Z"/>
                    <ellipse cx="2422" cy="2317" rx="20" ry="32"/><path d="M2540 2230c10-18 30-10 35 20 15 25 12 62-5 64-25 0-42-50-30-84Z"/><ellipse cx="2350" cy="2492" rx="22" ry="37"/><ellipse cx="2375" cy="2599" rx="18" ry="32"/><ellipse cx="2960" cy="2355" rx="22" ry="38"/>
                  </g>
                </g>
              </g>
              <g class="towns">
                <circle cx="226" cy="2" r="4"/><circle cx="612" cy="60" r="4"/><circle cx="366" cy="152" r="4"/><circle cx="416" cy="218" r="4"/><circle cx="140" cy="200" r="4"/><circle cx="212" cy="196" r="4"/><circle cx="622" cy="246" r="4"/><circle cx="84" cy="118" r="4"/>
                <circle cx="1098" cy="2" r="4"/><circle cx="1368" cy="58" r="4"/><circle cx="1060" cy="188" r="4"/><circle cx="1018" cy="322" r="4"/><circle cx="1126" cy="348" r="4"/><circle cx="984" cy="366" r="4"/><circle cx="1316" cy="312" r="4"/>
                <circle cx="446" cy="634" r="4"/><circle cx="578" cy="602" r="4"/><circle cx="760" cy="564" r="4"/><circle cx="704" cy="642" r="4"/><circle cx="622" cy="682" r="4"/><circle cx="692" cy="766" r="4"/><circle cx="810" cy="748" r="4"/>
                <circle cx="936" cy="466" r="4"/><circle cx="994" cy="538" r="4"/><circle cx="900" cy="558" r="4"/><circle cx="870" cy="572" r="4"/><circle cx="954" cy="656" r="4"/><circle cx="838" cy="784" r="4"/><circle cx="860" cy="854" r="4"/><circle cx="1056" cy="860" r="4"/><circle cx="996" cy="884" r="4"/>
                <circle cx="1388" cy="792" r="4"/><circle cx="1514" cy="782" r="4"/><circle cx="1346" cy="846" r="4"/>
                <circle cx="954" cy="866" r="6"/><circle class="capital" cx="954" cy="866" r="2"/>
              </g>
              <g class="cities">
                <text x="226" y="25">Las Vegas</text><text x="52" y="70">Bakersfield</text><text x="86" y="143">Los Angeles</text><text x="612" y="53">Albuquerque</text><text x="366" y="174">Phoenix</text><text x="416" y="209">Tucson</text><text x="141" y="193">Tijuana</text><text x="262" y="204">Mexicali</text><text x="623" y="273">Ciudad Juárez</text>
                <text x="1368" y="49">Memphis</text><text x="1061" y="179">Dallas</text><text x="1017" y="313">Austin</text><text x="1126" y="340">Houston</text><text x="983" y="390">San Antonio</text><text x="1316" y="336">Baton Rouge</text><text x="1625" y="157">Atlanta</text>
                <text x="1017" y="475">Nuevo Laredo</text><text x="1045" y="546">Reynosa</text><text x="900" y="550">Monterrey</text><text x="870" y="596">Saltillo</text><text x="954" y="680">Ciudad Victoria</text><text x="760" y="557">Torreón</text><text x="446" y="626">La Paz</text><text x="578" y="627">Culiacán</text><text x="703" y="666">Durango</text><text x="622" y="706">Mazatlán</text><text x="810" y="739">Aguascalientes</text><text x="692" y="790">Tepic</text><text x="872" y="792">León</text><text x="954" y="826">Ciudad de</text><text x="954" y="854">México</text><text x="814" y="860">Morelia</text><text x="1098" y="869">Xalapa</text><text x="996" y="909">Puebla</text><text x="1387" y="783">Mérida</text><text x="1514" y="807">Cancún</text><text x="1345" y="838">Campeche</text>
              </g>
              <text class="country" x="811" y="674">México</text>
              <g class="states">
                <text x="386" y="116">Arizona</text><text x="640" y="116">New Mexico</text><text x="1041" y="55">Oklahoma</text><text x="1256" y="85">Arkansas</text><text x="1538" y="26">Tennessee</text><text x="1384" y="204">Mississippi</text><text x="1518" y="204">Alabama</text><text x="924" y="272">Texas</text><text x="1295" y="292">Louisiana</text><text x="220" y="324">Baja California</text><text x="434" y="372">Sonora</text><text x="640" y="409">Chihuahua</text><text x="811" y="485">Coahuila</text><text x="388" y="566">Baja California</text><text x="388" y="590">Sur</text><text x="706" y="618">Durango</text><text x="990" y="601">Tamaulipas</text><text x="770" y="806">Jalisco</text>
              </g>
            </svg>
            <div class="zoom"><button type="button" aria-label="Acercar">+</button><button type="button" aria-label="Alejar">−</button></div>
          </div>
        </section>
      </div>
    </main>
  </div>
</div>
<button class="dev-badge" type="button" aria-label="Next.js">
  <svg viewBox="0 0 40 40"><defs><linearGradient id="fade-a" x1="0" y1="0" x2="0" y2="1"><stop offset=".5" stop-color="#fff"/><stop offset="1" stop-color="#fff" stop-opacity="0"/></linearGradient><linearGradient id="fade-b" gradientUnits="userSpaceOnUse" x1="22" y1="22" x2="31" y2="33"><stop offset="0" stop-color="#fff"/><stop offset="1" stop-color="#fff" stop-opacity="0"/></linearGradient></defs><path d="M9 31V9h3l20 25-3 2L12 14v17Z" fill="url(#fade-b)"/><rect x="28" y="9" width="3" height="19" fill="url(#fade-a)"/></svg>
</button>
</body>
</html>
```
FILE: styles.css
```css
:root {
  --bg: #edf1f6;
  --line: #e5e9f1;
  --ink: #101828;
  --muted: #6a7289;
  --faint: #8e96a7;
  --blue: #2b6cf8;
  --green: #0bab74;
  --amber: #e47b07;
  --red: #f5222d;
}
* { box-sizing: border-box; }
html, body { height: 100%; }
body { margin: 0; background: var(--bg); color: var(--ink); font-family: Inter, "Liberation Sans", sans-serif; font-size: 25px; }
h1, h2, h3, p { margin: 0; }
button, input, select { font: inherit; color: inherit; }
button { border: 0; padding: 0; background: none; cursor: pointer; text-align: left; }
a { color: inherit; text-decoration: none; }
.sprite { display: none; }
.icon { width: 32px; height: 32px; flex: none; fill: none; stroke: currentColor; stroke-width: 1.75; stroke-linecap: round; stroke-linejoin: round; }

.app { display: flex; height: 100vh; overflow: hidden; }

/* Sidebar */
.sidebar { flex: none; width: 446px; background: #fff; display: flex; flex-direction: column; }
.brand { flex: none; height: 112px; padding: 0 32px; display: flex; align-items: center; gap: 20px; font-size: 30px; font-weight: 600; }
.brand-mark { width: 64px; height: 64px; border-radius: 20px; background: var(--blue); color: #fff; display: grid; place-items: center; box-shadow: 0 3px 6px rgba(43, 108, 248, .3); }
.brand-mark .icon { stroke-width: 2; }
.nav { flex: 1; min-height: 0; overflow-y: auto; scrollbar-width: none; padding: 19px 20px; display: flex; flex-direction: column; gap: 31px; }
.nav-group { flex: none; display: flex; flex-direction: column; gap: 3px; }
.nav-title { height: 39px; padding: 2px 0 0 16px; display: flex; align-items: center; gap: 12px; font-size: 19px; font-weight: 600; color: var(--faint); }
.nav-title .icon { width: 20px; height: 20px; }
.nav-item { height: 72px; padding: 0 24px; border-radius: 24px; display: flex; align-items: center; gap: 20px; color: var(--muted); }
.nav-item .icon { stroke-opacity: .72; }
.nav-item.active { background: var(--blue); color: #fff; font-weight: 500; box-shadow: 0 3px 6px rgba(43, 108, 248, .3); }
.nav-item.active .icon { stroke-opacity: 1; stroke-width: 2; }
.side-foot { flex: none; height: 72px; padding: 0 24px; border-top: 2px solid #e9edf3; display: flex; align-items: center; justify-content: space-between; font-size: 19px; color: var(--faint); }
.version { height: 38px; padding: 0 12px; border-radius: 19px; background: #eef3f7; color: var(--muted); font: 500 20px/38px "Liberation Mono", monospace; }

/* Top bar */
.page { flex: 1; min-width: 0; display: flex; flex-direction: column; }
.topbar { flex: none; height: 112px; padding: 2px 40px 0 42px; border-bottom: 2px solid #e6eaf0; display: flex; align-items: center; gap: 26px; }
.crumbs { flex: 1; display: flex; align-items: center; gap: 8px; font-size: 27px; color: var(--muted); }
.crumbs a { display: flex; align-items: center; gap: 8px; }
.crumbs .icon { width: 28px; height: 28px; }
.crumbs .crumb-sep { width: 24px; height: 24px; color: var(--faint); }
.here { color: var(--ink); font-weight: 500; }
.search { width: 520px; height: 70px; padding: 0 24px; border: 2px solid var(--line); border-radius: 20px; background: #fff; display: flex; align-items: center; gap: 16px; color: var(--muted); box-shadow: 0 3px 5px rgba(16, 24, 40, .12); }
.search input { flex: 1; min-width: 0; border: 0; padding: 0; outline: 0; background: none; font-size: 27px; }
.search input::placeholder { color: var(--muted); opacity: 1; }
kbd { width: 54px; height: 42px; border: 2px solid #e2e8f0; border-radius: 8px; background: #f0f5f9; display: grid; place-items: center; font: 500 18px Inter, "DejaVu Sans", sans-serif; }
.bell { position: relative; width: 70px; height: 70px; border: 2px solid var(--line); border-radius: 50%; background: #fff; display: grid; place-items: center; color: var(--muted); }
.bell-dot { position: absolute; right: 11px; bottom: 11px; width: 12px; height: 12px; border-radius: 50%; background: var(--green); }
.user { height: 70px; padding: 0 20px 0 14px; border: 2px solid var(--line); border-radius: 35px; background: #fff; display: flex; align-items: center; gap: 18px; color: var(--muted); }
.user .icon { width: 24px; height: 24px; }
.avatar { width: 56px; height: 56px; border-radius: 50%; background: linear-gradient(135deg, #467ef9, #1f63f6); color: #fff; display: grid; place-items: center; font-size: 23px; font-weight: 600; }
.user-text { display: flex; flex-direction: column; }
.user-name { color: var(--ink); font-size: 23px; line-height: 28px; font-weight: 500; }
.user-role { font-size: 19px; line-height: 26px; }

/* Page content */
.content { flex: 1; min-height: 0; overflow-y: auto; scrollbar-width: none; padding: 48px 48px 48px 50px; display: flex; flex-direction: column; gap: 48px; }
.content > * { flex: none; }
.page-head { display: flex; align-items: center; justify-content: space-between; }
h1 { font-size: 48px; line-height: 62px; font-weight: 600; }
.page-head p { margin-top: 10px; font-size: 27px; line-height: 40px; color: var(--muted); }
.actions { display: flex; gap: 16px; }
.btn { height: 56px; padding: 0 20px; border: 2px solid var(--line); border-radius: 20px; background: #fff; display: flex; align-items: center; gap: 16px; font-size: 25px; font-weight: 500; white-space: nowrap; }
.btn .icon { width: 28px; height: 28px; stroke-width: 2; }
.btn.primary { background: var(--blue); border-color: transparent; background-clip: padding-box; color: #fff; box-shadow: 0 3px 6px rgba(43, 108, 248, .25); }

.stats { display: grid; grid-template-columns: repeat(4, minmax(0, 1fr)); gap: 24px; }
.stat, .card { border: 2px solid #eaeef4; border-radius: 34px; background: #fff; background-clip: padding-box; }
.stat { height: 220px; padding: 0 64px; display: flex; align-items: center; gap: 24px; }
.tile { width: 72px; height: 72px; border-radius: 20px; display: grid; place-items: center; flex: none; }
.tile .icon { width: 30px; height: 30px; stroke-width: 2; }
.blue { background: #eff8fa; color: var(--blue); }
.green { background: #eff8fa; color: var(--green); }
.amber { background: #fffbea; color: var(--amber); }
.red { background: #fef1f2; color: var(--red); }
.stat-text { margin-bottom: 4px; }
.stat p { font-size: 23px; line-height: 34px; color: var(--muted); }
.stat strong { display: block; font-size: 36px; line-height: 52px; font-weight: 600; }

.notice { height: 124px; padding: 0 24px; border: 2px solid #fee282; border-radius: 24px; background: #fffbea; display: flex; align-items: center; gap: 24px; color: var(--amber); }
.notice-text { flex: 1; }
.notice strong { font-size: 27px; line-height: 40px; font-weight: 500; color: #973c06; }
.notice p { font-size: 23px; line-height: 34px; }
.notice .btn { color: var(--ink); }

.filters { display: flex; gap: 16px; }
.filters .btn { font-size: 23px; }
.zone { position: relative; margin-left: auto; }
.zone select { height: 56px; width: 250px; padding: 0 24px; border: 2px solid var(--line); border-radius: 20px; background: transparent; appearance: none; font-size: 23px; }
.zone .icon { position: absolute; right: 4px; top: 16px; width: 28px; height: 24px; stroke-width: 4; pointer-events: none; }

.board { display: grid; grid-template-columns: minmax(0, 5fr) minmax(0, 13fr); gap: 32px; align-items: start; }
.side { display: flex; flex-direction: column; gap: 24px; }
.card { box-shadow: 0 2px 3px rgba(16, 24, 40, .05); }
.clients { padding: 34px 64px 28px; display: flex; flex-direction: column; gap: 30px; }
h2 { display: flex; align-items: center; gap: 16px; font-size: 27px; line-height: 36px; font-weight: 600; }
.clients h2 .icon { stroke-width: 2; }
.client { padding: 16px; display: flex; align-items: center; justify-content: space-between; font-size: 23px; line-height: 32px; }
.client-text { display: flex; flex-direction: column; }
.client-name { font-weight: 500; }
.client-place { color: var(--muted); }
.balance { display: flex; align-items: center; gap: 8px; color: var(--green); }
.dot { width: 20px; height: 20px; border-radius: 50%; background: var(--green); }
.dot.small { width: 16px; height: 16px; }
.amber-dot { background: var(--amber); }
.red-dot { background: var(--red); }
.legend { padding: 54px 56px; display: flex; flex-direction: column; gap: 12px; font-size: 23px; line-height: 36px; }
.legend h3 { font-size: 23px; font-weight: 500; color: var(--muted); }
.legend p { display: flex; align-items: center; gap: 16px; }

/* Map */
.map-card { padding: 32px; }
.map { position: relative; border-radius: 24px; overflow: hidden; background: #aad3df; }
.map-art { display: block; width: 100%; height: 1100px; font-family: "Noto Sans", sans-serif; text-anchor: middle; }
.land { fill: #f2efe9; stroke: #c3b9c9; stroke-width: 1; vector-effect: non-scaling-stroke; }
.sand { fill: #f5e9c6; }
.wood { fill: #add19e; }
.wood.pale { fill: #e2e6c4; }
.wood path { opacity: .85; }
.wood.grove path { opacity: .5; }
.wood.scatter { opacity: .65; }
.water, .lake { fill: #aad3df; }
.lines path, .lines ellipse { fill: none; stroke-linejoin: round; vector-effect: non-scaling-stroke; }
.lines .state { stroke: #cdc3d0; stroke-width: 2; }
.lines .nation { stroke: #b8adb9; stroke-width: 4; }
.lines path.sea, .lines .sea > * { stroke: #a29bb5; stroke-width: 3; }
.towns circle { fill: #fff; stroke: #6f6a74; stroke-width: 2; }
.towns .capital { fill: #444; }
.cities, .states, .country { paint-order: stroke; stroke: rgba(255, 255, 255, .7); stroke-width: 4px; stroke-linejoin: round; font-weight: 500; }
.cities { font-size: 22px; fill: #45454e; }
.country { font-size: 24px; fill: #6d6672; }
.states { font-size: 20px; font-style: italic; fill: #94889a; }
.zoom { position: absolute; left: 20px; top: 20px; width: 68px; border: 4px solid rgba(90, 80, 90, .4); border-radius: 8px; background: #fff; background-clip: padding-box; display: flex; flex-direction: column; }
.zoom button { height: 60px; padding-top: 12px; text-align: center; font: 700 44px/48px "Liberation Mono", monospace; }
.zoom button + button { border-top: 2px solid #ccc; }

.dev-badge { position: fixed; left: 38px; bottom: 38px; width: 76px; height: 76px; border-radius: 50%; border: 2px solid #14161b; background: #303338; box-shadow: inset 0 0 0 2px #56585d, 0 16px 32px rgba(0, 0, 0, .14); display: grid; place-items: center; }
.dev-badge svg { width: 40px; height: 40px; }
```
